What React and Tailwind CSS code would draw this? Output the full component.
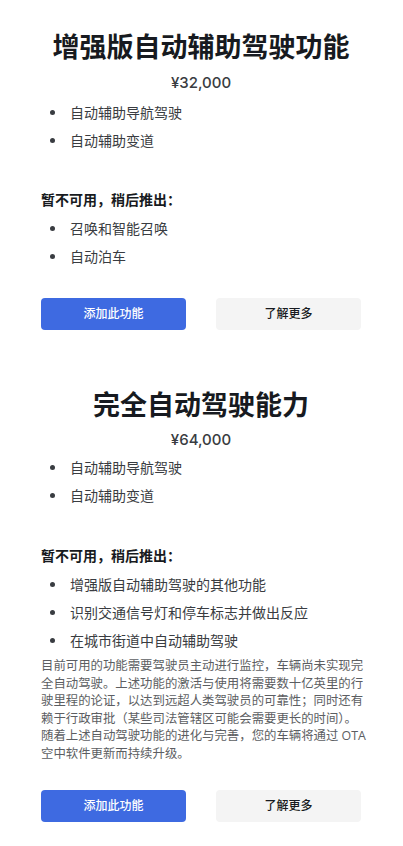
import React from "react";

const font = { fontFamily: '"Open Sans", "Noto Sans CJK SC", sans-serif' };
const priceFont = { fontFamily: 'Inter, "Noto Sans CJK SC", sans-serif' };

function Bullets({ items }) {
  return (
    <ul className="flex flex-col">
      {items.map((t) => (
        <li key={t} className="flex items-center h-[28px] text-[14px] text-[#393c41]">
          <span className="w-[5px] h-[5px] rounded-full bg-[#393c41] ml-[9px] mr-[15px]" />
          <span>{t}</span>
        </li>
      ))}
    </ul>
  );
}

function Buttons() {
  return (
    <div className="flex justify-between">
      <button className="w-[145px] h-[32px] rounded-[4px] bg-[#3e6ae1] text-white text-[12px] font-medium">
        添加此功能
      </button>
      <button className="w-[145px] h-[32px] rounded-[4px] bg-[#f4f4f4] text-[#171a20] text-[12px] font-medium">
        了解更多
      </button>
    </div>
  );
}

export default function App() {
  return (
    <div className="w-[403px] min-h-[846px] bg-white" style={font}>
      <div className="w-[320px] ml-[41px] pt-[29px] pb-[24px]">
        <h1 className="text-center text-[27px] leading-[36px] font-semibold text-[#171a20]">
          增强版自动辅助驾驶功能
        </h1>
        <div
          className="mt-[8px] text-center text-[15px] leading-[20px] font-medium text-[#393c41]"
          style={priceFont}
        >
          ¥32,000
        </div>
        <div className="mt-[5px]">
          <Bullets items={["自动辅助导航驾驶", "自动辅助变道"]} />
        </div>
        <div className="mt-[36px] text-[14px] leading-[20px] font-bold text-[#171a20]">
          暂不可用，稍后推出：
        </div>
        <div className="mt-[4px]">
          <Bullets items={["召唤和智能召唤", "自动泊车"]} />
        </div>
        <div className="mt-[28px]">
          <Buttons />
        </div>

        <h1 className="mt-[57px] text-center text-[27px] leading-[36px] font-semibold text-[#171a20]">
          完全自动驾驶能力
        </h1>
        <div
          className="mt-[7px] text-center text-[15px] leading-[20px] font-medium text-[#393c41]"
          style={priceFont}
        >
          ¥64,000
        </div>
        <div className="mt-[3px]">
          <Bullets items={["自动辅助导航驾驶", "自动辅助变道"]} />
        </div>
        <div className="mt-[37px] text-[14px] leading-[20px] font-bold text-[#171a20]">
          暂不可用，稍后推出：
        </div>
        <div className="mt-[4px]">
          <Bullets
            items={[
              "增强版自动辅助驾驶的其他功能",
              "识别交通信号灯和停车标志并做出反应",
              "在城市街道中自动辅助驾驶",
            ]}
          />
        </div>
        <p className="mt-[3px] text-[12.4px] leading-[17.5px] text-[#5c5e62] whitespace-nowrap">
          目前可用的功能需要驾驶员主动进行监控，车辆尚未实现完
          <br />
          全自动驾驶。上述功能的激活与使用将需要数十亿英里的行
          <br />
          驶里程的论证，以达到远超人类驾驶员的可靠性；同时还有
          <br />
          赖于行政审批（某些司法管辖区可能会需要更长的时间）。
          <br />
          随着上述自动驾驶功能的进化与完善，您的车辆将通过 OTA
          <br />
          空中软件更新而持续升级。
        </p>
        <div className="mt-[28px]">
          <Buttons />
        </div>
      </div>
    </div>
  );
}
